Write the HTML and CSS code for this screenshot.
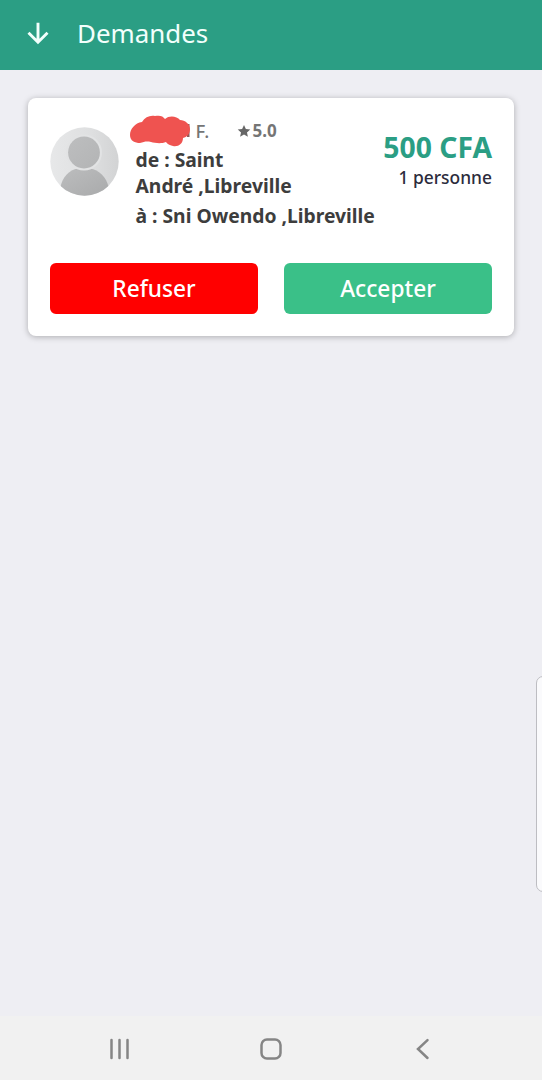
FILE: index.html
```html
<!DOCTYPE html>
<html lang="fr">
<head>
<meta charset="utf-8">
<title>Demandes</title>
<link rel="stylesheet" href="styles.css">
</head>
<body>
<div class="screen">
  <header class="topbar">
    <svg class="back" width="24" height="24" viewBox="0 0 24 24"><path d="M12 1.700V21M2.500 11.800l9.500 9.500L21.500 11.800"/></svg>
    <h1 class="title">Demandes</h1>
  </header>
  <main class="content">
    <article class="card">
      <div class="request">
        <svg class="avatar" width="69" height="69" viewBox="0 0 69 69">
          <defs>
            <linearGradient id="bg" x1="0" y1="0" x2="1" y2="0"><stop offset="0" stop-color="#e7e8e9"/><stop offset=".6" stop-color="#dedfe0"/><stop offset="1" stop-color="#d2d3d4"/></linearGradient>
            <linearGradient id="fg" x1="0" y1="0" x2="1" y2="1"><stop offset="0" stop-color="#bcbdbe"/><stop offset="1" stop-color="#a9aaab"/></linearGradient>
            <linearGradient id="head" x1="0" y1="0" x2="1" y2="1"><stop offset="0" stop-color="#bdbebf"/><stop offset="1" stop-color="#b3b4b5"/></linearGradient>
            <clipPath id="disc"><circle cx="34.500" cy="34.500" r="34.200"/></clipPath>
          </defs>
          <g clip-path="url(#disc)">
            <rect width="69" height="69" fill="url(#bg)"/>
            <path d="M10.500 69V60C12 51 19 42.500 28 41.500H40C49 42.500 57 51 58.500 60V69z" fill="url(#fg)"/>
            <circle cx="34" cy="25.500" r="18" fill="#e2e3e4"/>
            <circle cx="34" cy="25.500" r="15.900" fill="url(#head)"/>
          </g>
        </svg>
        <div class="details">
          <div class="person">
            <svg class="redaction" width="64" height="34" viewBox="0 0 64 34"><rect x="57" y="10" width="2.500" height="13" fill="#8c5a5a"/><path d="M0 21C0 15 5 9 12 8C15 3 20 1 25 2C30 1 33 2 35 5C39 1 47 2 50 6C55 6 60 10 60 15C60 20 57 23 53 24C53 30 48 33 43 32C38 31 37 29 36 28C31 30 25 29 21 28C16 27 14 28 10 29C5 29 0 27 0 21Z" fill="#ef5350"/></svg>
            <span class="name">F.</span>
            <svg class="star" width="14" height="14" viewBox="0 0 24 24"><path d="M12 1.500l3.200 7 7.600.8-5.700 5.100 1.600 7.600-6.700-3.900L5.300 22l1.600-7.600-5.700-5.100 7.600-.8z"/></svg>
            <span class="rating">5.0</span>
          </div>
          <p class="from">de : Saint<br>André ,Libreville</p>
          <p class="to">à : Sni Owendo ,Libreville</p>
        </div>
        <div class="fare">
          <div class="price">500 CFA</div>
          <div class="seats">1 personne</div>
        </div>
      </div>
      <div class="actions">
        <button class="button refuse">Refuser</button>
        <button class="button accept">Accepter</button>
      </div>
    </article>
  </main>
  <nav class="navbar">
    <svg width="22" height="22" viewBox="0 0 22 22"><path d="M2.500 2v18M10.500 2v18M18.500 2v18"/></svg>
    <svg width="22" height="22" viewBox="0 0 22 22"><rect x="1.500" y="1.500" width="19" height="19" rx="5.500"/></svg>
    <svg width="22" height="22" viewBox="0 0 22 22"><path d="M16.500 2.200L7 11l9.500 9"/></svg>
  </nav>
  <div class="edge-panel"></div>
</div>
</body>
</html>
```
FILE: styles.css
```css
* { box-sizing: border-box; }
body { margin: 0; font-family: "Noto Sans", "Open Sans", sans-serif; }
h1, p { margin: 0; }
.screen {
  position: relative;
  display: flex;
  flex-direction: column;
  height: 1080px;
  overflow: hidden;
  background: #eeeef3;
}
.topbar {
  display: flex;
  align-items: center;
  gap: 27px;
  height: 70px;
  padding: 0 26px 4px;
  background: #2b9e84;
}
.back { fill: none; stroke: #f2fffc; stroke-width: 2.900; }
.title { font-size: 25.900px; font-weight: 390; line-height: 36px; color: #f2fffc; }
.content { flex: 1; padding: 28px 28px 0; }
.card {
  height: 238px;
  padding: 17px 22px 22px;
  border-radius: 8px;
  background: #fff;
  box-shadow: 0 1px 6px rgba(0, 0, 0, .28);
}
.request { display: flex; height: 148px; }
.avatar { flex: none; margin: 11.500px 17px 0 -.5px; }
.details { flex: none; width: 240px; color: #3d3d3d; font-weight: 700; font-size: 19.300px; line-height: 26px; white-space: nowrap; }
.person { display: flex; align-items: center; height: 30px; padding-top: 1px; color: #757575; }
.redaction { flex: none; margin: 0 2px 0 -6px; }
.name { width: 41px; font-size: 18.500px; font-weight: 500; }
.star { margin-right: 2px; fill: #666; }
.rating { font-size: 17px; }
.from { padding-top: 2px; }
.to { margin-top: 4px; }
.fare { flex: 1; display: flex; flex-direction: column; align-items: flex-end; padding-top: 13px; white-space: nowrap; }
.price { color: #2b9e84; font-size: 28.300px; font-weight: 700; line-height: 38px; }
.seats { color: #2c2c3c; font-size: 17.400px; font-weight: 500; line-height: 22px; }
.actions { display: grid; grid-template-columns: 1fr 1fr; gap: 26px; }
.button {
  height: 51px;
  padding: 0;
  border: 0;
  border-radius: 6px;
  color: #fff;
  font: 540 22.700px/51px "Noto Sans", "Open Sans", sans-serif;
}
.refuse { background: #f00; }
.accept { background: #3ac088; }
.navbar {
  display: flex;
  justify-content: space-between;
  align-items: center;
  height: 64px;
  padding: 2px 109px 0 109px;
  background: #f1f1f1;
}
.navbar svg { fill: none; stroke: #858585; stroke-width: 2.500; stroke-linecap: round; }
.edge-panel {
  position: absolute;
  top: 676px;
  right: -8px;
  width: 14px;
  height: 216px;
  border: 1px solid #bdbdc2;
  border-radius: 8px;
  background: #fafafc;
}
```
